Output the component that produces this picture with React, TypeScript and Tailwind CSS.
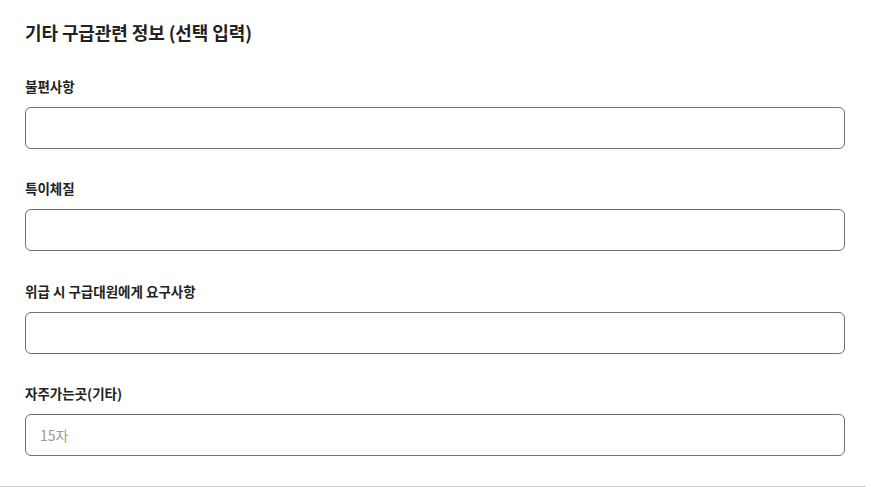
import React from "react";

const fields = [
  { label: "불편사항", placeholder: "" },
  { label: "특이체질", placeholder: "" },
  { label: "위급 시 구급대원에게 요구사항", placeholder: "" },
  { label: "자주가는곳(기타)", placeholder: "15자" },
];

export default function App() {
  return (
    <div
      className="w-[871px] h-[487px] bg-white overflow-hidden"
      style={{ fontFamily: '"Noto Sans CJK KR", "Noto Sans", sans-serif' }}
    >
      <div className="w-[866px] h-[487px] border-b border-[#cfcfcf] pl-[25px] pr-[21px] pt-[19px]">
        <h2 className="text-[18px] leading-[26px] font-bold text-[#222] tracking-[-0.1px]">
          기타 구급관련 정보 (선택 입력)
        </h2>
        <div className="mt-[32px] flex flex-col gap-[30px]">
          {fields.map((f, i) => (
            <div key={f.label} className={i === 2 ? "flex flex-col mt-[1px]" : "flex flex-col"}>
              <label className="text-[13.5px] leading-[18px] font-bold text-[#222]">
                {f.label}
              </label>
              <input
                type="text"
                placeholder={f.placeholder}
                className="mt-[12px] w-[820px] h-[42px] rounded-[6px] border border-[#6f6f6f] px-[14px] text-[14px] text-[#222] placeholder:text-[#9a9a9a] outline-none"
              />
            </div>
          ))}
        </div>
      </div>
    </div>
  );
}
